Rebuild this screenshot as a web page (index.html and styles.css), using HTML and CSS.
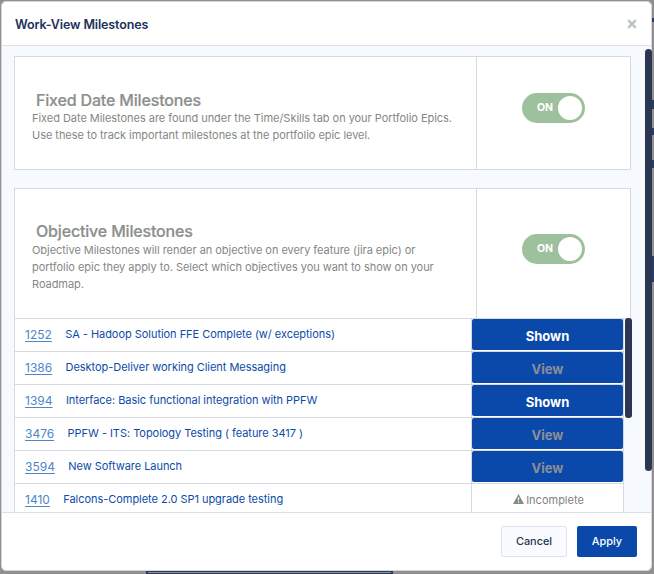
FILE: index.html
```html
<!DOCTYPE html>
<html lang="en">
<head>
<meta charset="utf-8">
<title>Work-View Milestones</title>
<link rel="stylesheet" href="styles.css">
</head>
<body>
<div class="backdrop-bits">
  <i class="bit b1"></i><i class="bit b2"></i><i class="bit b3"></i><i class="bit b4"></i><i class="bit b5"></i><i class="bit b6"></i>
</div>
<div class="modal">
  <header class="head">
    <h1>Work-View Milestones</h1>
    <svg class="close" width="10" height="10" viewBox="0 0 10 10"><path d="M1.2 1.2 8.8 8.8M8.8 1.2 1.2 8.8"/></svg>
  </header>
  <main class="body">
    <section class="card fixed">
      <div class="info">
        <h2>Fixed Date Milestones</h2>
        <p>Fixed Date Milestones are found under the Time/Skills tab on your Portfolio Epics.<br>Use these to track important milestones at the portfolio epic level.</p>
      </div>
      <div class="control"><div class="toggle"><span>ON</span><b></b></div></div>
    </section>
    <section class="card objective">
      <div class="info">
        <h2>Objective Milestones</h2>
        <p>Objective Milestones will render an objective on every feature (jira epic) or<br>portfolio epic they apply to. Select which objectives you want to show on your<br>Roadmap.</p>
      </div>
      <div class="control"><div class="toggle"><span>ON</span><b></b></div></div>
    </section>
    <div class="list">
      <div class="rows">
        <div class="row"><div class="name"><a>1252</a><span>SA - Hadoop Solution FFE Complete (w/ exceptions)</span></div><div class="state"><button class="shown">Shown</button></div></div>
        <div class="row"><div class="name"><a>1386</a><span>Desktop-Deliver working Client Messaging</span></div><div class="state"><button class="view">View</button></div></div>
        <div class="row"><div class="name"><a>1394</a><span>Interface: Basic functional integration with PPFW</span></div><div class="state"><button class="shown">Shown</button></div></div>
        <div class="row"><div class="name"><a>3476</a><span>PPFW - ITS: Topology Testing ( feature 3417 )</span></div><div class="state"><button class="view">View</button></div></div>
        <div class="row"><div class="name"><a>3594</a><span>New Software Launch</span></div><div class="state"><button class="view">View</button></div></div>
        <div class="row"><div class="name"><a>1410</a><span>Falcons-Complete 2.0 SP1 upgrade testing</span></div><div class="state"><div class="incomplete"><svg width="11" height="10" viewBox="0 0 11 10"><path fill-rule="evenodd" d="M5.5 0 11 10H0ZM4.8 3.2 5 6.5H6L6.2 3.2ZM4.9 7.4V8.7H6.1V7.4Z"/></svg><span>Incomplete</span></div></div></div>
      </div>
      <i class="list-thumb"></i>
    </div>
  </main>
  <footer class="foot">
    <button class="btn cancel">Cancel</button>
    <button class="btn apply">Apply</button>
  </footer>
  <i class="body-thumb"></i>
</div>
</body>
</html>
```
FILE: styles.css
```css
* { box-sizing: border-box; }
body {
  margin: 0;
  width: 654px;
  height: 574px;
  padding: 1px;
  overflow: hidden;
  background: #918f91;
  font-family: Inter, "Liberation Sans", sans-serif;
}
h1, h2, p { margin: 0; }
button { font-family: inherit; padding: 0; border: 0; display: block; }

/* page fragments visible around the dialog */
.bit { position: absolute; background: #2b3b62; }
.b1 { left: 652px; top: 18px; width: 2px; height: 4px; }
.b2 { left: 652px; top: 100px; width: 2px; height: 9px; }
.b3 { left: 652px; top: 128px; width: 2px; height: 7px; }
.b4 { left: 652px; top: 160px; width: 2px; height: 8px; }
.b5 { left: 652px; top: 256px; width: 2px; height: 26px; }
.b6 { left: 146px; top: 571px; width: 247px; height: 3px; border: solid #2b3b62; border-width: 1px 2px; background: #8d8d99; }

.modal {
  position: relative;
  width: 651px;
  height: 570px;
  display: flex;
  flex-direction: column;
  background: #fff;
  border: 1px solid #d6d6d8;
  border-radius: 5px;
}
.head {
  height: 44px;
  flex: none;
  display: flex;
  align-items: center;
  justify-content: space-between;
  padding: 0 14px 0 13px;
  border-bottom: 1px solid #dce1ea;
}
h1 { font-size: 12.5px; font-weight: 600; color: #21315a; letter-spacing: -0.14px; line-height: 18px; padding-top: 2px; }
.close { stroke: #bbc6c0; stroke-width: 2.4; fill: none; }
.body {
  height: 466px;
  flex: none;
  overflow: hidden;
  background: #f6fafe;
  padding: 10px 20px 0 12px;
}
.card {
  display: flex;
  width: 617px;
  background: #fff;
  border: 1px solid #d5dae2;
  color: #8c908c;
}
.fixed { height: 114px; margin-bottom: 18px; }
.objective { height: 131px; }
.info { width: 462px; border-right: 1px solid #d5dae2; padding: 32px 0 0 17px; flex: none; }
h2 { font-size: 16px; line-height: 20px; font-weight: 500; padding: 0 0 1px 4px; letter-spacing: -0.17px; -webkit-text-stroke: 0.2px currentColor; }
.fixed h2 { padding: 1px 0 0 4px; }
p { font-size: 11px; line-height: 17px; white-space: nowrap; letter-spacing: -0.04px; color: #838883; }
.control { flex: 1; display: flex; padding: 36px 0 0 45px; }
.objective .control { padding-top: 45px; }
.toggle {
  width: 63px;
  height: 30px;
  border-radius: 15px;
  background: #9dc19d;
  display: flex;
  align-items: center;
  justify-content: space-between;
  padding: 0 3px 0 15px;
  color: #fff;
  font-size: 10.5px;
  line-height: 14px;
  font-weight: 700;
}
.toggle b { width: 24px; height: 24px; border-radius: 50%; background: #fff; }

.list { display: flex; width: 618px; }
.rows { width: 610px; border: solid #d5dae2; border-width: 0 1px; background: #fff; flex: none; }
.list-thumb { width: 7px; height: 100px; margin: -1px 0 0 1px; border-radius: 3px; background: #2b3752; position: relative; }
.row { height: 33px; display: flex; border-bottom: 1px solid #d5dae2; }
.name {
  width: 457px;
  flex: none;
  display: flex;
  border-right: 1px solid #d5dae2;
  padding-left: 10px;
  line-height: 31px;
  white-space: nowrap;
  font-size: 11px;
  letter-spacing: -0.04px;
  color: #0c4ba8;
}
.name a { font-size: 12px; letter-spacing: 0; color: #5085c8; text-decoration: underline; text-underline-offset: 2px; margin-right: 13.4px; }
.state { flex: 1; }
.state button {
  width: 151px;
  height: 31px;
  background: #0a49aa;
  border-radius: 2px;
  font-size: 13px;
  font-weight: 700;
  line-height: 35px;
}
.shown { color: #fff; }
.view { color: #8c8e96; }
.incomplete { display: flex; justify-content: center; align-items: center; gap: 2px; height: 31px; padding-left: 2px; font-size: 11px; color: #7f847f; }
.incomplete svg { fill: #858a85; margin-top: -2px; }

.foot {
  flex: 1;
  border-top: 1px solid #d9e0ea;
  display: flex;
  justify-content: flex-end;
  gap: 10px;
  padding: 13px 14px 0 0;
}
.btn { height: 31px; border-radius: 2px; font-size: 10.9px; font-weight: 500; line-height: 29px; padding-bottom: 1px; }
.cancel { width: 66px; background: #f9fbfe; border: 1px solid #dde4ee; line-height: 27px; color: #263450; }
.apply { width: 60px; background: #0a49aa; color: #fff; }
.body-thumb { position: absolute; right: -1px; top: 47px; width: 7px; height: 422px; border-radius: 4px; background: #2b3752; }
```
